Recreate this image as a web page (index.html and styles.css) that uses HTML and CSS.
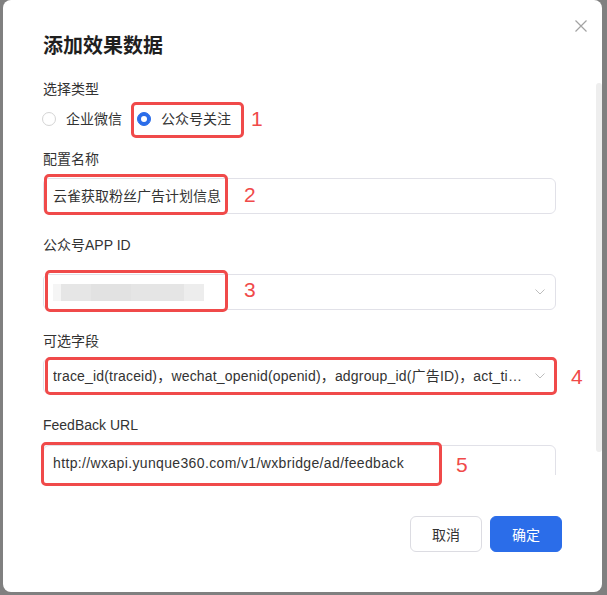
FILE: index.html
```html
<!DOCTYPE html>
<html lang="zh-CN">
<head>
<meta charset="utf-8">
<title>添加效果数据</title>
<link rel="stylesheet" href="styles.css">
</head>
<body>
<div class="dialog">
  <button class="close" aria-label="关闭">
    <svg width="12" height="12" viewBox="0 0 12 12"><path d="M0.5 0.5 L11.5 11.5 M11.5 0.5 L0.5 11.5" stroke="#a3a3a3" stroke-width="1.2" fill="none"/></svg>
  </button>
  <div class="header"><h2 class="title">添加效果数据</h2></div>
  <div class="body">
    <div class="form-item form-item--radio">
      <div class="label">选择类型</div>
      <div class="radio-group">
        <label class="radio"><span class="radio-dot"></span><span>企业微信</span></label>
        <label class="radio radio--checked"><span class="radio-dot"></span><span>公众号关注</span></label>
      </div>
    </div>
    <div class="form-item">
      <div class="label">配置名称</div>
      <div class="field">云雀获取粉丝广告计划信息</div>
    </div>
    <div class="form-item">
      <div class="label label--wide">公众号APP ID</div>
      <div class="field field--select">
        <span class="select-text"><span class="blurred"></span></span>
        <svg class="chevron" width="10" height="6" viewBox="0 0 10 6"><path d="M0.5 0.5 L5 5 L9.5 0.5" stroke="#bdbdbd" stroke-width="1" fill="none"/></svg>
      </div>
    </div>
    <div class="form-item">
      <div class="label label--tight">可选字段</div>
      <div class="field field--select">
        <span class="select-text select-text--latin">trace_id(traceid)，wechat_openid(openid)，adgroup_id(广告ID)，act_time(行为时间)</span>
        <svg class="chevron" width="10" height="6" viewBox="0 0 10 6"><path d="M0.5 0.5 L5 5 L9.5 0.5" stroke="#bdbdbd" stroke-width="1" fill="none"/></svg>
      </div>
    </div>
    <div class="form-item">
      <div class="label label--loose">FeedBack URL</div>
      <div class="field field--latin">http://wxapi.yunque360.com/v1/wxbridge/ad/feedback</div>
    </div>
  </div>
  <div class="scroll-thumb"></div>
  <div class="footer">
    <button class="btn">取消</button>
    <button class="btn btn--primary">确定</button>
  </div>

  <div class="mark mark-1"></div>
  <div class="mark mark-2"></div>
  <div class="mark mark-3"></div>
  <div class="mark mark-4"></div>
  <div class="mark mark-5"></div>
  <span class="num num-1">1</span>
  <span class="num num-2">2</span>
  <span class="num num-3">3</span>
  <span class="num num-4">4</span>
  <span class="num num-5">5</span>
</div>
</body>
</html>
```

FILE: styles.css
```css
* { box-sizing: border-box; }

html, body {
  margin: 0;
  height: 595px;
  overflow: hidden;
}

body {
  padding: 0 5px 0 3px;
  background: #808080;
  font-family: "Liberation Sans", "Noto Sans CJK SC", sans-serif;
  font-size: 14px;
  color: #333333;
}

.dialog {
  position: relative;
  width: 599px;
  height: 592px;
  background: #ffffff;
  border-radius: 8px;
  display: flex;
  flex-direction: column;
  overflow: hidden;
}

.close {
  position: absolute;
  top: 20px;
  right: 15px;
  width: 12px;
  height: 12px;
  padding: 0;
  border: 0;
  background: transparent;
  display: block;
}
.close svg { display: block; }

.header {
  padding: 32px 40px 0;
}

.title {
  margin: 0;
  font-size: 20px;
  line-height: 28px;
  font-weight: 600;
  color: #1f1f1f;
}

.body {
  height: 415px;
  overflow: hidden;
  padding: 18px 46px 0 40px;
  flex: none;
}

.form-item {
  margin-bottom: 20px;
}
.form-item--radio {
  margin-bottom: 18px;
}

.label {
  line-height: 22px;
  margin-bottom: 8px;
  color: #333333;
}
.label--wide { margin-bottom: 18px; }
.label--tight { margin-bottom: 6px; }
.label--loose { margin-bottom: 9px; }

.form-item--radio .label { margin-bottom: 8px; }

.radio-group {
  display: flex;
  align-items: center;
  height: 22px;
}

.radio {
  display: inline-flex;
  align-items: center;
  gap: 10px;
  margin-right: 16px;
  line-height: 22px;
  color: #333333;
}

.radio-dot {
  position: relative;
  width: 14px;
  height: 14px;
  border: 1px solid #d4d4d4;
  border-radius: 50%;
  background: #ffffff;
  flex: none;
  margin-left: -1px;
}

.radio--checked .radio-dot {
  background: #2b6de9;
  border-color: #2b6de9;
}
.radio--checked .radio-dot::after {
  content: "";
  position: absolute;
  left: 3px;
  top: 3px;
  width: 6px;
  height: 6px;
  border-radius: 50%;
  background: #ffffff;
}

.field {
  height: 36px;
  border: 1px solid #e1e1e8;
  border-radius: 6px;
  padding: 0 9px;
  line-height: 34px;
  color: #333333;
  white-space: nowrap;
  overflow: hidden;
}

.field--latin {
  letter-spacing: 0.36px;
}

.field--select {
  display: flex;
  align-items: center;
  padding-right: 10px;
}

.select-text {
  flex: 1;
  min-width: 0;
  overflow: hidden;
  text-overflow: ellipsis;
  white-space: nowrap;
  margin-right: 8px;
  display: block;
}

.select-text--latin {
  letter-spacing: 0.18px;
}

.blurred {
  display: block;
  margin-left: -2px;
  width: 153px;
  height: 17px;
  background: linear-gradient(to right, #f5f5f5 0 10px, #e6e6e6 10px 40px, #e2e2e2 40px 80px, #e5e5e5 80px 133px, #ededed 133px);
  filter: blur(0.4px);
}

.chevron {
  flex: none;
  display: block;
}

.scroll-thumb {
  position: absolute;
  left: 593px;
  top: 83px;
  width: 6px;
  height: 369px;
  background: #eeeeee;
  border-radius: 3px;
}

.footer {
  display: flex;
  justify-content: flex-end;
  gap: 8px;
  padding: 41px 40px 40px;
}

.btn {
  width: 72px;
  height: 36px;
  border-radius: 6px;
  border: 1px solid #dcdce2;
  background: #ffffff;
  font-family: "Liberation Sans", "Noto Sans CJK SC", sans-serif;
  font-size: 14px;
  color: #333333;
  padding: 0;
}

.btn--primary {
  background: #2b6de9;
  border-color: #2b6de9;
  color: #ffffff;
}

.mark {
  position: absolute;
  border: 3px solid #f04a4a;
  border-radius: 5px;
}
.mark-1 { left: 128px; top: 102px; width: 113px; height: 36px; }
.mark-2 { left: 41px; top: 174px; width: 184px; height: 41px; }
.mark-3 { left: 42px; top: 270px; width: 183px; height: 42px; }
.mark-4 { left: 42px; top: 357px; width: 512px; height: 38px; }
.mark-5 { left: 38px; top: 442px; width: 401px; height: 44px; }

.num {
  position: absolute;
  font-family: "Liberation Sans", sans-serif;
  font-size: 21px;
  line-height: 21px;
  color: #f04a4a;
}
.num-1 { left: 248px; top: 108px; }
.num-2 { left: 241px; top: 184px; }
.num-3 { left: 241px; top: 279px; }
.num-4 { left: 568px; top: 366px; }
.num-5 { left: 453px; top: 454px; }
```
